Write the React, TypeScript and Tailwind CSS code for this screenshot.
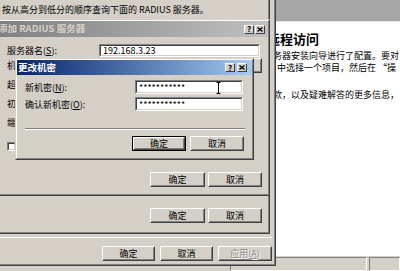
import type { ReactNode } from 'react';

// Win classic 3D edges
const raisedOuter = 'border border-t-white border-l-white border-r-[#404040] border-b-[#404040]';
const raisedInner = 'border border-t-[#d4d0c8] border-l-[#d4d0c8] border-r-[#808080] border-b-[#808080]';
const sunkenOuter = 'border border-t-[#808080] border-l-[#808080] border-r-white border-b-white';
const sunkenInner = 'border border-t-[#404040] border-l-[#404040] border-r-[#d4d0c8] border-b-[#d4d0c8]';

function Frame({ className, children }: { className: string; children: ReactNode }) {
  return (
    <div className={`absolute bg-[#d4d0c8] border border-t-[#d4d0c8] border-l-[#d4d0c8] border-r-[#404040] border-b-[#404040] ${className}`}>
      <div className="flex h-full flex-col border border-t-white border-l-white border-r-[#808080] border-b-[#808080]">{children}</div>
    </div>
  );
}

function Btn({ label, w, def, disabled }: { label: ReactNode; w: string; def?: boolean; disabled?: boolean }) {
  return (
    <div className={`flex h-[15px] shrink-0 ${w} ${def ? 'border border-black' : ''}`}>
      <div className={`flex flex-1 ${raisedOuter}`}>
        <div className={`flex flex-1 items-center justify-center text-[9px] leading-none ${raisedInner} ${disabled ? 'text-[#8a8a8a] [text-shadow:1px_1px_0_#fff]' : 'text-black'}`}>
          {label}
        </div>
      </div>
    </div>
  );
}

function CapBtn({ kind }: { kind: 'help' | 'close' }) {
  return (
    <div className={`flex h-[9px] w-[10px] bg-[#d4d0c8] ${raisedOuter}`}>
      <div className="flex flex-1 items-center justify-center">
        {kind === 'help' ? (
          <span className="text-[8px] font-bold leading-none text-black">?</span>
        ) : (
          <svg width="6" height="5" viewBox="0 0 6 5">
            <path d="M0.5 0.5 L5.5 4.5 M5.5 0.5 L0.5 4.5" stroke="#000" strokeWidth="1.3" />
          </svg>
        )}
      </div>
    </div>
  );
}

function Input({ w, h, children }: { w: string; h: string; children?: ReactNode }) {
  return (
    <div className={`flex shrink-0 ${w} ${h} ${sunkenOuter}`}>
      <div className={`flex flex-1 items-center bg-white pl-[2px] text-[9px] leading-none text-black ${sunkenInner}`}>{children}</div>
    </div>
  );
}

export default function App() {
  return (
    <div className="relative h-[271px] w-[400px] overflow-hidden bg-[#d4d0c8] font-['Noto_Sans_CJK_SC',sans-serif] text-black">
      {/* MMC window behind the dialogs */}
      <div className="absolute inset-0 flex">
        <div className="w-[230px] shrink-0" />
        <div className="flex flex-1 flex-col">
          <div className="h-[21px] bg-[#a6a6a6]" />
          <div className="h-px bg-[#e6e6e6]" />
          <div className="flex flex-1 flex-col bg-white">
            <div className="whitespace-nowrap pl-[37px] pt-[10px] text-[13px] font-bold leading-[13px]">远程访问</div>
            <div className="mt-[5px] whitespace-nowrap pl-[43px] text-[9px] leading-[12px]">务器安装向导进行了配置。要对</div>
            <div className="whitespace-nowrap pl-[47px] text-[9px] leading-[12px]">中选择一个项目，然后在 “操</div>
            <div className="mt-[15px] whitespace-nowrap pl-[43px] text-[9px] leading-[12px]">款，以及疑难解答的更多信息，</div>
          </div>
          <div className="flex h-[15px] gap-[2px] bg-[#d4d0c8] pt-px">
            <div className={`w-[137px] ${sunkenOuter}`} />
            <div className={`flex-1 ${sunkenOuter}`} />
          </div>
        </div>
      </div>

      {/* outer property sheet */}
      <Frame className="left-[-4px] top-[-4px] h-[270px] w-[280px]">
        <div className="flex flex-1 flex-col justify-end pb-[3px] pr-[2px]">
          <div className="h-px bg-white" />
          <div className="mt-[8px] flex justify-end gap-[5px]">
            <Btn label="确定" w="w-[53px]" />
            <Btn label="取消" w="w-[53px]" />
            <Btn label={<>应用(<u>A</u>)</>} w="w-[54px]" disabled />
          </div>
        </div>
      </Frame>

      {/* server group dialog */}
      <Frame className="left-[-4px] top-[-4px] h-[238px] w-[274px]">
        <div className="flex flex-1 flex-col pb-[9px] pl-[4px] pr-[6px] pt-[7px]">
          <div className="whitespace-nowrap text-[9px] leading-[10px]">按从高分到低分的顺序查询下面的 RADIUS 服务器。</div>
          <div className="mt-auto flex justify-end gap-[3px]">
            <Btn label="确定" w="w-[55px]" />
            <Btn label="取消" w="w-[54px]" />
          </div>
        </div>
      </Frame>

      {/* 添加 RADIUS 服务器 (inactive) */}
      <Frame className="left-[-4px] top-[19px] h-[177px] w-[274px]">
        <div className="flex h-[16px] shrink-0 items-center bg-gradient-to-r from-[#808080] to-[#c0c0c0] pr-[3px]">
          <span className="whitespace-nowrap text-[9.5px] font-bold leading-none text-[#d4d0c8]">添加 RADIUS 服务器</span>
          <div className="ml-auto flex gap-px">
            <CapBtn kind="help" />
            <CapBtn kind="close" />
          </div>
        </div>
        <div className="flex flex-1 flex-col pl-[9px] pr-[6px] pt-[7px] text-[9px] leading-none">
          <div className="flex h-[13px] items-center">
            <span className="w-[92px] shrink-0 whitespace-nowrap">服务器名(<u>S</u>):</span>
            <Input w="w-[161px]" h="h-[13px]">192.168.3.23</Input>
          </div>
          <div className="-mt-px flex h-[19px] items-center">
            <span className="whitespace-nowrap">机密(<u>E</u>):</span>
            <div className="ml-auto">
              <Btn label={<>更改(<u>C</u>)...</>} w="w-[67px]" />
            </div>
          </div>
          <div className="flex h-[19px] items-center whitespace-nowrap">超时(秒)(<u>T</u>):</div>
          <div className="flex h-[19px] items-center whitespace-nowrap">初始分数(<u>I</u>):</div>
          <div className="flex h-[19px] items-center whitespace-nowrap">端口(<u>P</u>):</div>
          <div className="mt-[10px] flex h-[9px] items-center gap-[4px]">
            <div className={`h-[9px] w-[9px] shrink-0 ${sunkenOuter}`}>
              <div className={`h-full w-full bg-white ${sunkenInner}`} />
            </div>
            <span className="whitespace-nowrap">总是使用消息验证器(<u>A</u>)</span>
          </div>
          <div className="mt-[21px] flex justify-end gap-[3px]">
            <Btn label="确定" w="w-[55px]" />
            <Btn label="取消" w="w-[54px]" />
          </div>
        </div>
      </Frame>

      {/* 更改机密 (active) */}
      <Frame className="left-[15px] top-[58px] h-[102px] w-[239px]">
        <div className="flex h-[15px] shrink-0 items-center bg-gradient-to-r from-[#0a246a] to-[#a6caf0] pl-px pr-[5px]">
          <span className="whitespace-nowrap text-[9.5px] font-bold leading-none text-white">更改机密</span>
          <div className="ml-auto flex gap-[2px]">
            <CapBtn kind="help" />
            <CapBtn kind="close" />
          </div>
        </div>
        <div className="flex flex-1 flex-col pl-[8px] pr-[9px] pt-[5px] text-[9px] leading-none">
          <div className="flex h-[14px] items-center">
            <span className="w-[110px] shrink-0 whitespace-nowrap">新机密(<u>N</u>):</span>
            <Input w="w-[108px]" h="h-[14px]">***********</Input>
          </div>
          <div className="mt-[3px] flex h-[14px] items-center">
            <span className="w-[110px] shrink-0 whitespace-nowrap">确认新机密(<u>O</u>):</span>
            <Input w="w-[108px]" h="h-[14px]">***********</Input>
          </div>
          <div className="mt-[17px] h-[2px] w-[220px] border-t border-b border-t-[#808080] border-b-white" />
          <div className="mt-[6px] flex gap-[4px] pl-[107px]">
            <Btn label="确定" w="w-[54px]" def />
            <Btn label="取消" w="w-[54px]" />
          </div>
        </div>
      </Frame>

      {/* I-beam mouse cursor */}
      <svg className="absolute left-[216px] top-[82px]" width="5" height="12" viewBox="0 0 5 12">
        <path d="M0.5 0.5 H4.5 M2.5 0.5 V11.5 M0.5 11.5 H4.5" stroke="#000" strokeWidth="1" fill="none" />
      </svg>
    </div>
  );
}
